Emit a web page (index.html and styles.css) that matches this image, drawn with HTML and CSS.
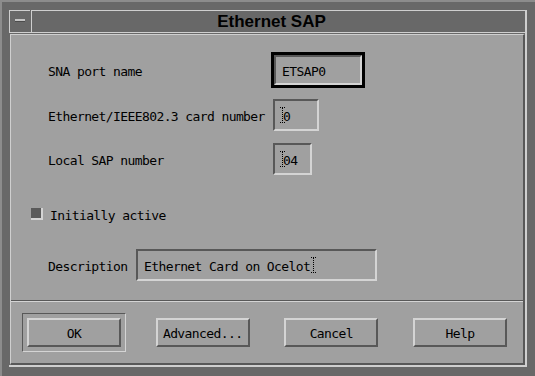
FILE: index.html
```html
<!DOCTYPE html>
<html lang="en">

<head>
    <meta charset="UTF-8">
    <meta name="viewport" content="width=device-width, initial-scale=1.0">
    <title>Ethernet SAP</title>
    <link rel="stylesheet" href="styles.css">
</head>

<body>
    <div class="window">
        <div class="shell">
            <header class="titlebar">
                <div class="menu-btn"><span class="menu-bar"></span></div>
                <h1 class="title">Ethernet SAP</h1>
            </header>
            <main class="panel">
                <div class="form">
                    <div class="row row-name">
                        <label class="label">SNA port name</label>
                        <div class="field field-focus field-name">ETSAP0</div>
                    </div>
                    <div class="row row-card">
                        <label class="label">Ethernet/IEEE802.3 card number</label>
                        <div class="field field-card">
                            <svg class="cursor" width="5" height="16" viewBox="0 0 5 16"><path d="M0 0.5h1M2 0.5h1M4 0.5h1M0 15.5h1M2 15.5h1M4 15.5h1" stroke="#000"/><path d="M2.5 1v14" stroke="#000" stroke-dasharray="1 1"/></svg>0
                        </div>
                    </div>
                    <div class="row row-sap">
                        <label class="label">Local SAP number</label>
                        <div class="field field-sap">
                            <svg class="cursor" width="5" height="16" viewBox="0 0 5 16"><path d="M0 0.5h1M2 0.5h1M4 0.5h1M0 15.5h1M2 15.5h1M4 15.5h1" stroke="#000"/><path d="M2.5 1v14" stroke="#000" stroke-dasharray="1 1"/></svg>04
                        </div>
                    </div>
                    <div class="row row-check">
                        <span class="checkbox"></span>
                        <span class="check-label">Initially active</span>
                    </div>
                    <div class="row row-desc">
                        <label class="label label-desc">Description</label>
                        <div class="field field-desc">
                            Ethernet Card on Ocelot<svg class="cursor cursor-end" width="5" height="16" viewBox="0 0 5 16"><path d="M0 0.5h1M2 0.5h1M4 0.5h1M0 15.5h1M2 15.5h1M4 15.5h1" stroke="#000"/><path d="M2.5 1v14" stroke="#000" stroke-dasharray="1 1"/></svg>
                        </div>
                    </div>
                </div>
                <div class="separator"></div>
                <div class="buttons">
                    <button class="btn btn-default">OK</button>
                    <button class="btn">Advanced...</button>
                    <button class="btn">Cancel</button>
                    <button class="btn">Help</button>
                </div>
            </main>
        </div>
    </div>
</body>

</html>
```

FILE: styles.css
```css
body {
    margin: 0;
    padding: 0;
    background-color: #686868;
    font-family: "DejaVu Sans Mono", monospace;
    font-size: 13px;
    letter-spacing: -0.6px;
    color: #000;
}

.window {
    width: 535px;
    height: 376px;
    box-sizing: border-box;
    background-color: #686868;
    border-top: 2px solid #8c8c8c;
    border-left: 2px solid #8c8c8c;
    padding: 8px 8px 9px 7px;
}

.shell {
    height: 100%;
    box-sizing: border-box;
    border-right: 2px solid #cfcfcf;
    border-bottom: 2px solid #cfcfcf;
    display: flex;
    flex-direction: column;
}

.titlebar {
    display: flex;
    height: 23px;
    box-sizing: border-box;
    border-bottom: 1px solid #cfcfcf;
    margin-bottom: 1px;
}

.menu-btn {
    width: 21px;
    box-sizing: border-box;
    border-top: 1px solid #cfcfcf;
    border-left: 1px solid #cfcfcf;
    margin-right: 1px;
    display: flex;
    align-items: center;
    justify-content: center;
}

.menu-bar {
    width: 10px;
    height: 2px;
    margin-top: -3px;
    background-color: #c4c4c4;
    box-shadow: 0 1px 0 #4c4c4c;
}

.title {
    flex: 1;
    margin: 0;
    border-top: 1px solid #cfcfcf;
    border-left: 1px solid #cfcfcf;
    font-family: "Liberation Sans", Arial, sans-serif;
    font-size: 17px;
    font-weight: bold;
    letter-spacing: 0;
    line-height: 21px;
    text-align: center;
    padding-right: 14px;
}

.panel {
    flex: 1;
    margin-left: 1px;
    background-color: #a0a0a0;
    border-top: 1px solid #cfcfcf;
    border-left: 1px solid #cfcfcf;
    border-right: 2px solid #585858;
    border-bottom: 2px solid #585858;
    display: flex;
    flex-direction: column;
}

.form {
    display: flex;
    flex-direction: column;
    padding: 17px 0 19px 37px;
}

.row {
    display: flex;
    align-items: center;
}

.row-card {
    margin-top: 11px;
}

.row-sap {
    margin-top: 12px;
}

.row-check {
    margin-top: 31px;
    margin-left: -17px;
    height: 16px;
}

.row-desc {
    margin-top: 27px;
}

.label,
.check-label {
    padding-top: 2px;
}

.label {
    width: 225px;
}

.label-desc {
    width: 88px;
}

.field {
    box-sizing: border-box;
    height: 32px;
    border-top: 2px solid #585858;
    border-left: 2px solid #585858;
    border-right: 2px solid #d4d4d4;
    border-bottom: 2px solid #d4d4d4;
    padding: 2px 0 0 5px;
    display: flex;
    align-items: center;
}

.field-focus {
    outline: 3px solid #000;
}

.field-name {
    width: 88px;
    height: 30px;
    margin: 3px 0 3px 1px;
    padding-left: 6px;
}

.field-card {
    width: 46px;
}

.field-sap {
    width: 39px;
}

.field-desc {
    width: 241px;
    padding-left: 6px;
}

.cursor {
    display: block;
    margin: -2px -2px 0 0;
}

.cursor-end {
    margin-right: 0;
    margin-left: 1px;
}

.checkbox {
    width: 12px;
    height: 12px;
    box-sizing: border-box;
    background-color: #5a5a5a;
    border-right: 2px solid #d4d4d4;
    border-bottom: 2px solid #d4d4d4;
    margin-right: 7px;
}

.separator {
    border-top: 1px solid #585858;
    border-bottom: 1px solid #d4d4d4;
}

.buttons {
    display: flex;
    gap: 34.67px;
    padding: 16px 0 15px 16px;
}

.btn {
    position: relative;
    width: 94px;
    height: 29px;
    box-sizing: border-box;
    padding: 2px 0 0;
    margin: 0;
    font: inherit;
    letter-spacing: -0.6px;
    color: #000;
    background-color: #a0a0a0;
    border-top: 2px solid #d4d4d4;
    border-left: 2px solid #d4d4d4;
    border-right: 2px solid #585858;
    border-bottom: 2px solid #585858;
    border-radius: 0;
}

.btn-default::before {
    content: "";
    position: absolute;
    top: -7px;
    left: -7px;
    right: -7px;
    bottom: -7px;
    border-top: 1px solid #585858;
    border-left: 1px solid #585858;
    border-right: 1px solid #d4d4d4;
    border-bottom: 1px solid #d4d4d4;
}
```
